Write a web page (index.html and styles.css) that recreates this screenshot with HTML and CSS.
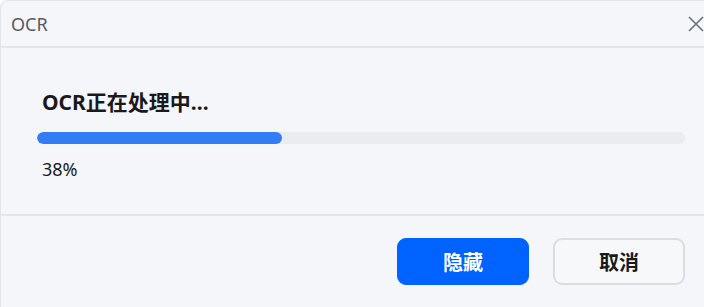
FILE: index.html
```html
<!DOCTYPE html>
<html lang="zh">
<head>
<meta charset="utf-8">
<link rel="stylesheet" href="styles.css">
</head>
<body>
<div class="dialog">
  <div class="header">
    <span class="title">OCR</span>
    <button class="close" aria-label="关闭">
      <svg width="16" height="16" viewBox="0 0 16 16"><path d="M1 1 L15 15 M15 1 L1 15" stroke="#6b7080" stroke-width="1.6" fill="none"/></svg>
    </button>
  </div>
  <div class="content">
    <div class="heading">OCR正在处理中...</div>
    <div class="track"><div class="fill" style="width:37.8%"></div></div>
    <div class="percent">38%</div>
  </div>
  <div class="footer">
    <button class="btn primary">隐藏</button>
    <button class="btn secondary">取消</button>
  </div>
</div>
</body>
</html>
```
FILE: styles.css
```css
html, body {
  margin: 0;
  padding: 0;
  background: #ffffff;
}
body {
  font-family: "Noto Sans", "Noto Sans CJK SC", sans-serif;
}
.dialog {
  width: 704px;
  height: 307px;
  box-sizing: border-box;
  background: #f5f6fa;
  border-top: 1px solid #e3e4e8;
  border-left: 1px solid #e3e4e8;
  border-top-left-radius: 8px;
  display: flex;
  flex-direction: column;
}
.header {
  border-bottom: 2px solid #e4e5ea;
  display: flex;
  align-items: center;
  justify-content: space-between;
  padding-left: 10px;
  box-sizing: border-box;
  height: 47px;
}
.title {
  font-size: 18px;
  color: #555a66;
}
.close {
  background: none;
  border: 0;
  padding: 0;
  margin-right: -2px;
  width: 18px;
  height: 18px;
  display: flex;
  align-items: center;
  justify-content: flex-start;
}
.content {
  padding: 39px 19px 33px 36px;
  border-bottom: 2px solid #e4e5ea;
}
.heading {
  margin-left: 5px;
  font-size: 21px;
  line-height: 30px;
  font-weight: 700;
  color: #1a1a1a;
}
.track {
  margin-top: 15px;
  height: 12px;
  border-radius: 6px;
  background: #ebecf0;
  overflow: hidden;
}
.fill {
  height: 100%;
  border-radius: 6px;
  background: #327cf5;
}
.percent {
  margin-top: 13px;
  margin-left: 5px;
  font-size: 18px;
  line-height: 24px;
  color: #1a1a1a;
}
.footer {
  display: flex;
  justify-content: flex-end;
  gap: 24px;
  padding: 22px 19px 0 0;
}
.btn {
  width: 132px;
  height: 47px;
  border-radius: 9px;
  font-family: "Noto Sans CJK SC", sans-serif;
  font-size: 20px;
  font-weight: 700;
  cursor: pointer;
}
.primary {
  background: #0062ff;
  border: 1px solid #0062ff;
  color: #ffffff;
}
.secondary {
  background: #f7f8fa;
  border: 2px solid #dcdde2;
  color: #1a1a1a;
}
```
